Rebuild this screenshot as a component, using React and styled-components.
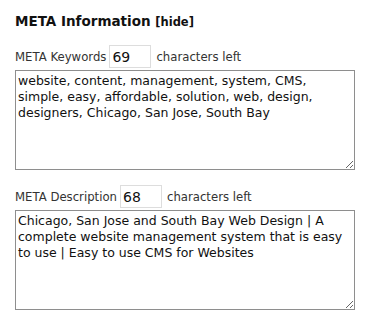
import React from 'react';
import styled, { createGlobalStyle } from 'styled-components';

const GlobalStyle = createGlobalStyle`
  body {
    margin: 0;
    background: #fff;
    font-family: "DejaVu Sans", Verdana, sans-serif;
    color: #222;
  }
`;

const Panel = styled.div`
  padding: 13px 13px 0 15px;
  width: 339px;
`;

const Title = styled.h3`
  margin: 0 0 16px;
  font-size: 13.5px;
  font-weight: bold;
  color: #111;
`;

const Hide = styled.a`
  font-size: 11.5px;
  color: #111;
  text-decoration: none;
  cursor: pointer;
`;

const Field = styled.div`
  margin-bottom: ${(p) => p.gap || 0}px;
`;

const LabelRow = styled.div`
  display: flex;
  align-items: center;
  gap: 3px;
  font-size: 11.7px;
  color: #333;
  margin-bottom: 2px;
`;

const Counter = styled.input`
  width: 36px;
  height: 19px;
  padding: 1px 2px;
  border: 1px solid #ddd;
  font-family: inherit;
  font-size: 14px;
  color: #111;
  margin-right: 2px;
`;

const Text = styled.textarea`
  display: block;
  box-sizing: border-box;
  width: 340px;
  height: 100px;
  padding: 2px;
  border: 1px solid #8e8e8e;
  font-family: "DejaVu Sans", Verdana, sans-serif;
  font-size: 12.5px;
  line-height: 16px;
  color: #111;
  resize: both;
`;

export default function App() {
  return (
    <Panel>
      <GlobalStyle />
      <Title>
        META Information <Hide>[hide]</Hide>
      </Title>
      <Field gap={15}>
        <LabelRow>
          META Keywords <Counter defaultValue="69" /> characters left
        </LabelRow>
        <Text defaultValue="website, content, management, system, CMS, simple, easy, affordable, solution, web, design, designers, Chicago, San Jose, South Bay" />
      </Field>
      <Field>
        <LabelRow>
          META Description <Counter defaultValue="68" /> characters left
        </LabelRow>
        <Text defaultValue="Chicago, San Jose and South Bay Web Design | A complete website management system that is easy to use | Easy to use CMS for Websites" />
      </Field>
    </Panel>
  );
}
